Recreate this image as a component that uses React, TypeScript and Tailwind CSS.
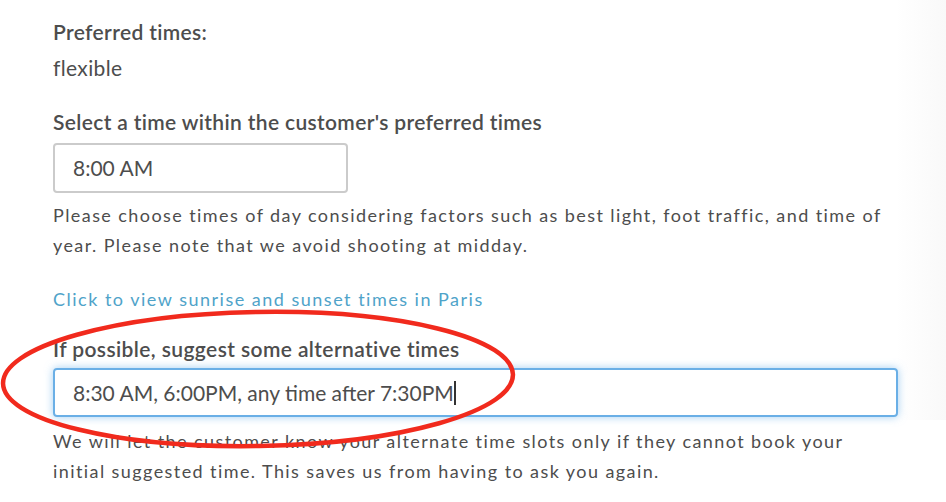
import React from "react";

export default function App() {
  return (
    <div
      className="relative w-[946px] h-[502px] overflow-hidden bg-white text-[#4d4d4d]"
      style={{ fontFamily: "Lato, 'Open Sans', sans-serif" }}
    >
      <div className="absolute right-0 top-0 h-[420px] w-[50px] bg-gradient-to-r from-white to-[#f9f9f9]" />
      <div className="relative pl-[53px] pr-[20px] pt-[17px]">
        <div className="text-[21px] leading-[30px] font-semibold tracking-[0.35px]">Preferred times:</div>
        <div className="text-[21px] leading-[30px] mt-[6px] tracking-[0.35px]">flexible</div>

        <div className="text-[21px] leading-[30px] font-semibold mt-[24px] tracking-[0.35px]">
          Select a time within the customer's preferred times
        </div>
        <div className="mt-[6px] w-[295px] h-[50px] rounded-[4px] border-2 border-[#cbcbcb] flex items-center pl-[18px] text-[21px]">
          8:00 AM
        </div>
        <p className="mt-[7px] text-[18px] leading-[30px] tracking-[1.42px] whitespace-nowrap">
          Please choose times of day considering factors such as best light, foot traffic, and time of
          <br />
          year. Please note that we avoid shooting at midday.
        </p>
        <div className="mt-[24px] text-[18px] leading-[30px] tracking-[1.5px] text-[#4fa3c9]">
          Click to view sunrise and sunset times in Paris
        </div>

        <div className="text-[21px] leading-[30px] font-semibold mt-[20px] tracking-[0.4px]">
          If possible, suggest some alternative times
        </div>
        <div className="mt-[4px] w-[845px] h-[49px] rounded-[4px] border-2 border-[#6aafe6] shadow-[0_0_8px_rgba(102,175,233,0.6)] flex items-center pl-[18px] text-[21px]">
          <span>8:30 AM, 6:00PM, any time after 7:30PM</span>
          <span className="inline-block w-[2px] h-[24px] bg-[#333]" />
        </div>
        <p className="mt-[9px] text-[18px] leading-[30px] tracking-[1.42px] whitespace-nowrap">
          We will let the customer know your alternate time slots only if they cannot book your
          <br />
          initial suggested time. This saves us from having to ask you again.
        </p>
      </div>

      <svg className="absolute left-0 top-0 pointer-events-none" width="946" height="502">
        <ellipse
          cx="258"
          cy="379"
          rx="255"
          ry="67"
          transform="rotate(-1 258 379)"
          fill="none"
          stroke="#f12a1d"
          strokeWidth="4.5"
        />
      </svg>
    </div>
  );
}
